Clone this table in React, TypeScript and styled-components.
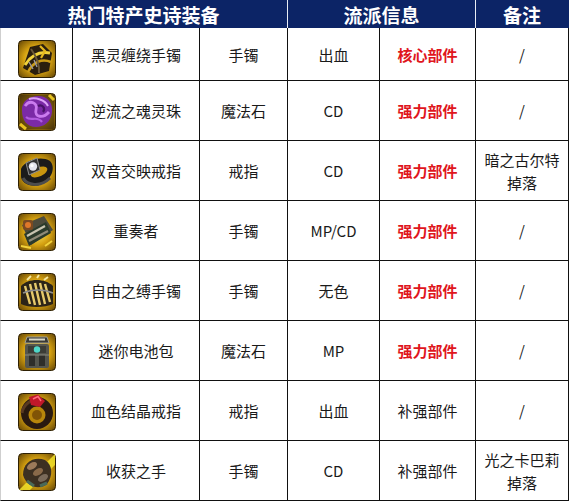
import React from "react";
import styled, { createGlobalStyle } from "styled-components";

const GlobalStyle = createGlobalStyle`
  html, body {
    margin: 0;
    padding: 0;
    background: #fff;
  }
  body {
    font-family: "Noto Sans CJK SC", "Noto Sans", sans-serif;
  }
`;

const Table = styled.div`
  display: grid;
  grid-template-columns: 73px 127px 88px 92px 96px 93px;
  grid-template-rows: 28px 53px repeat(7, 60px);
  width: 569px;
  background: #fff;
`;

const HeaderCell = styled.div<{ $span: number; $last?: boolean }>`
  grid-column: span ${(p) => p.$span};
  box-sizing: border-box;
  background: #0c2466;
  color: #fff;
  font-weight: 700;
  font-size: 19px;
  display: flex;
  align-items: center;
  justify-content: center;
  border-right: 1px solid ${(p) => (p.$last ? "#0c2466" : "#e8ecf5")};
  line-height: 1;
  padding-top: 1px;
`;

const Cell = styled.div<{ $first?: boolean }>`
  box-sizing: border-box;
  display: flex;
  align-items: center;
  justify-content: center;
  text-align: center;
  border-right: 1px solid #111;
  border-bottom: 1px solid #111;
  border-left: ${(p) => (p.$first ? "1px solid #cfcfcf" : "none")};
  font-size: 15px;
  color: #1a1a1a;
  line-height: 23px;
`;

const IconCell = styled(Cell)<{ $drop?: number }>`
  padding-top: ${(p) => p.$drop ?? 2}px;
`;

const Level = styled.span<{ $core: boolean }>`
  font-weight: ${(p) => (p.$core ? 700 : 400)};
  color: ${(p) => (p.$core ? "#e0161d" : "#1a1a1a")};
`;

const Note = styled.span`
  display: block;
  width: 80px;
`;

type Kind =
  | "bind"
  | "orb"
  | "ring"
  | "duet"
  | "free"
  | "battery"
  | "blood"
  | "hand";

const Frame = ({ id, children }: { id: string; children: React.ReactNode }) => (
  <svg width="38" height="38" viewBox="0 0 38 38">
    <defs>
      <radialGradient id={`g-${id}`} cx="50%" cy="50%" r="72%">
        <stop offset="0%" stopColor="#fff06a" />
        <stop offset="50%" stopColor="#d4a010" />
        <stop offset="100%" stopColor="#5a3d04" />
      </radialGradient>
    </defs>
    <rect x="0.5" y="0.5" width="37" height="37" rx="4" fill={`url(#g-${id})`} stroke="#2e2003" />
    {children}
  </svg>
);

const ItemIcon = ({ kind }: { kind: Kind }) => {
  switch (kind) {
    case "bind":
      return (
        <Frame id={kind}>
          <path d="M5 28 L12 7 L25 4 L34 13 L31 31 L17 35 Z" fill="#2a1e0e" />
          <path d="M7 25 C12 17 20 11 32 13" stroke="#f2d23a" strokeWidth="3" fill="none" />
          <path d="M10 32 C15 22 24 18 33 22" stroke="#c99a17" strokeWidth="2.5" fill="none" />
          <path d="M13 9 C18 16 22 24 21 33" stroke="#6a5838" strokeWidth="2" fill="none" />
          <path d="M22 6 L27 11 L23 18" stroke="#e6b81f" strokeWidth="2.2" fill="none" />
          <path d="M11 22 L15 29 M16 20 L19 27" stroke="#9a9aa6" strokeWidth="1.3" />
        </Frame>
      );
    case "orb":
      return (
        <Frame id={kind}>
          <rect x="1.5" y="1.5" width="35" height="35" rx="3" fill="#2a1e0c" opacity="0.55" />
          <path d="M4 18 C3 8 12 3 20 3 C30 3 35 10 34 19 C33 29 26 34 18 34 C9 34 4 27 4 18 Z" fill="#7b2aa6" />
          <path d="M7 13 C12 6 20 10 18 17 C16 24 25 26 31 19" stroke="#cb7cef" strokeWidth="2.8" fill="none" />
          <path d="M8 24 C13 29 19 22 24 29" stroke="#b35ddf" strokeWidth="2.2" fill="none" />
          <path d="M11 6 C18 4 27 7 30 13" stroke="#dea4f7" strokeWidth="2" fill="none" />
          <path d="M20 13 C24 11 28 15 25 19" stroke="#4a126a" strokeWidth="2.2" fill="none" />
          <path d="M2 31 L8 36 M31 2 L36 7" stroke="#e6c220" strokeWidth="3" />
        </Frame>
      );
    case "ring":
      return (
        <Frame id={kind}>
          <path d="M3 16 C6 8 22 2 32 8 C38 14 34 26 24 31 C14 36 2 30 3 22 Z" fill="#1b1b1b" />
          <ellipse cx="21" cy="19" rx="9" ry="4.5" fill="#c9960f" transform="rotate(-25 21 19)" />
          <path d="M5 25 C9 32 22 35 32 25" stroke="#4d4d4d" strokeWidth="3" fill="none" />
          <path d="M8 10 L19 5 L22 17 L11 22 Z" fill="#333" stroke="#909090" strokeWidth="1" />
          <circle cx="15" cy="13.5" r="4.2" fill="#e4e4ee" />
          <circle cx="14" cy="12.5" r="1.6" fill="#fff" />
        </Frame>
      );
    case "duet":
      return (
        <Frame id={kind}>
          <path d="M4 12 L26 3 L35 17 L13 32 Z" fill="#4d4b3c" />
          <path d="M6 21 L28 9 L33 20 L11 33 Z" fill="#2b3a2b" />
          <path d="M9 23 L27 13" stroke="#c7c3b0" strokeWidth="2.2" />
          <path d="M11 28 L30 18" stroke="#8f8a78" strokeWidth="2.2" />
          <rect x="5" y="7" width="10" height="10" rx="2" fill="#7a4a22" />
          <circle cx="10" cy="12" r="3" fill="#e0782a" />
          <path d="M3 33 L13 35 M27 33 L34 28" stroke="#f2d23a" strokeWidth="2" />
        </Frame>
      );
    case "free":
      return (
        <Frame id={kind}>
          <path d="M3 13 C10 5 27 5 35 13 L35 31 C27 35 10 35 3 31 Z" fill="#2b2418" />
          <path d="M7 13 L12 31 M12 11 L17 32 M17 10 L22 32 M22 10 L27 31 M27 11 L32 29" stroke="#e6c96a" strokeWidth="2.4" />
          <path d="M5 20 C14 16 26 16 35 20" stroke="#8e8e8e" strokeWidth="1.5" fill="none" />
          <path d="M9 7 L13 3 M19 5 L21 2 M26 7 L30 4" stroke="#f5e7a0" strokeWidth="2" />
        </Frame>
      );
    case "battery":
      return (
        <Frame id={kind}>
          <path d="M9 4 L29 4 L31 10 L7 10 Z" fill="#3a3a36" stroke="#9c9c92" strokeWidth="1" />
          <rect x="11" y="5.5" width="16" height="2" fill="#d8d8c8" />
          <rect x="7" y="11" width="24" height="24" rx="2" fill="#55564e" />
          <rect x="10" y="13" width="18" height="7" fill="#3b3c36" />
          <circle cx="19" cy="16.5" r="3.2" fill="#4fd6c8" />
          <rect x="11" y="22" width="6" height="11" fill="#2e2e2a" />
          <rect x="21" y="22" width="6" height="11" fill="#2e2e2a" />
          <path d="M7 22 L31 22" stroke="#8a8a80" strokeWidth="1" />
        </Frame>
      );
    case "blood":
      return (
        <Frame id={kind}>
          <circle cx="19" cy="20" r="16" fill="#2a1a10" />
          <circle cx="19" cy="22" r="8.5" fill="#b8860b" />
          <circle cx="19" cy="22" r="5" fill="#805406" />
          <path d="M4 20 C5 12 14 5 22 6" stroke="#5a3a22" strokeWidth="3" fill="none" />
          <path d="M11 4 L20 1.5 L27 8 L22 14 L13 12 Z" fill="#c0182a" />
          <path d="M15 6 L20 3.5 L23 8" stroke="#ff6b7a" strokeWidth="1.5" fill="none" />
        </Frame>
      );
    case "hand":
      return (
        <Frame id={kind}>
          <path d="M1 37 L37 1 L37 12 L12 37 Z" fill="#f2e22a" opacity="0.85" />
          <path d="M5 22 C5 9 16 3 27 7 C35 12 35 23 29 31 C22 37 9 35 5 22 Z" fill="#3d3022" />
          <ellipse cx="14" cy="13" rx="5.5" ry="3.2" fill="#9c7a5a" transform="rotate(-30 14 13)" />
          <ellipse cx="20" cy="19" rx="5.5" ry="3.2" fill="#8a6a4a" transform="rotate(-30 20 19)" />
          <ellipse cx="25" cy="25" rx="5.5" ry="3.2" fill="#7a6a5a" transform="rotate(-30 25 25)" />
          <path d="M9 28 L16 33 M22 33 L29 30" stroke="#4a6a5a" strokeWidth="3" />
        </Frame>
      );
  }
};

type Row = {
  icon: Kind;
  name: string;
  type: string;
  school: string;
  level: string;
  core: boolean;
  note: string;
};

const rows: Row[] = [
  { icon: "bind", name: "黑灵缠绕手镯", type: "手镯", school: "出血", level: "核心部件", core: true, note: "/" },
  { icon: "orb", name: "逆流之魂灵珠", type: "魔法石", school: "CD", level: "强力部件", core: true, note: "/" },
  { icon: "ring", name: "双音交映戒指", type: "戒指", school: "CD", level: "强力部件", core: true, note: "暗之古尔特掉落" },
  { icon: "duet", name: "重奏者", type: "手镯", school: "MP/CD", level: "强力部件", core: true, note: "/" },
  { icon: "free", name: "自由之缚手镯", type: "手镯", school: "无色", level: "强力部件", core: true, note: "/" },
  { icon: "battery", name: "迷你电池包", type: "魔法石", school: "MP", level: "强力部件", core: true, note: "/" },
  { icon: "blood", name: "血色结晶戒指", type: "戒指", school: "出血", level: "补强部件", core: false, note: "/" },
  { icon: "hand", name: "收获之手", type: "手镯", school: "CD", level: "补强部件", core: false, note: "光之卡巴莉掉落" },
];

export default function App() {
  return (
    <>
      <GlobalStyle />
      <Table>
        <HeaderCell $span={3}>热门特产史诗装备</HeaderCell>
        <HeaderCell $span={2}>流派信息</HeaderCell>
        <HeaderCell $span={1} $last>
          备注
        </HeaderCell>
        {rows.map((r, i) => (
          <React.Fragment key={r.name}>
            <IconCell $first $drop={i === 0 ? 10 : 2}>
              <ItemIcon kind={r.icon} />
            </IconCell>
            <Cell>{r.name}</Cell>
            <Cell>{r.type}</Cell>
            <Cell>{r.school}</Cell>
            <Cell>
              <Level $core={r.core}>{r.level}</Level>
            </Cell>
            <Cell>
              <Note>{r.note}</Note>
            </Cell>
          </React.Fragment>
        ))}
      </Table>
    </>
  );
}
